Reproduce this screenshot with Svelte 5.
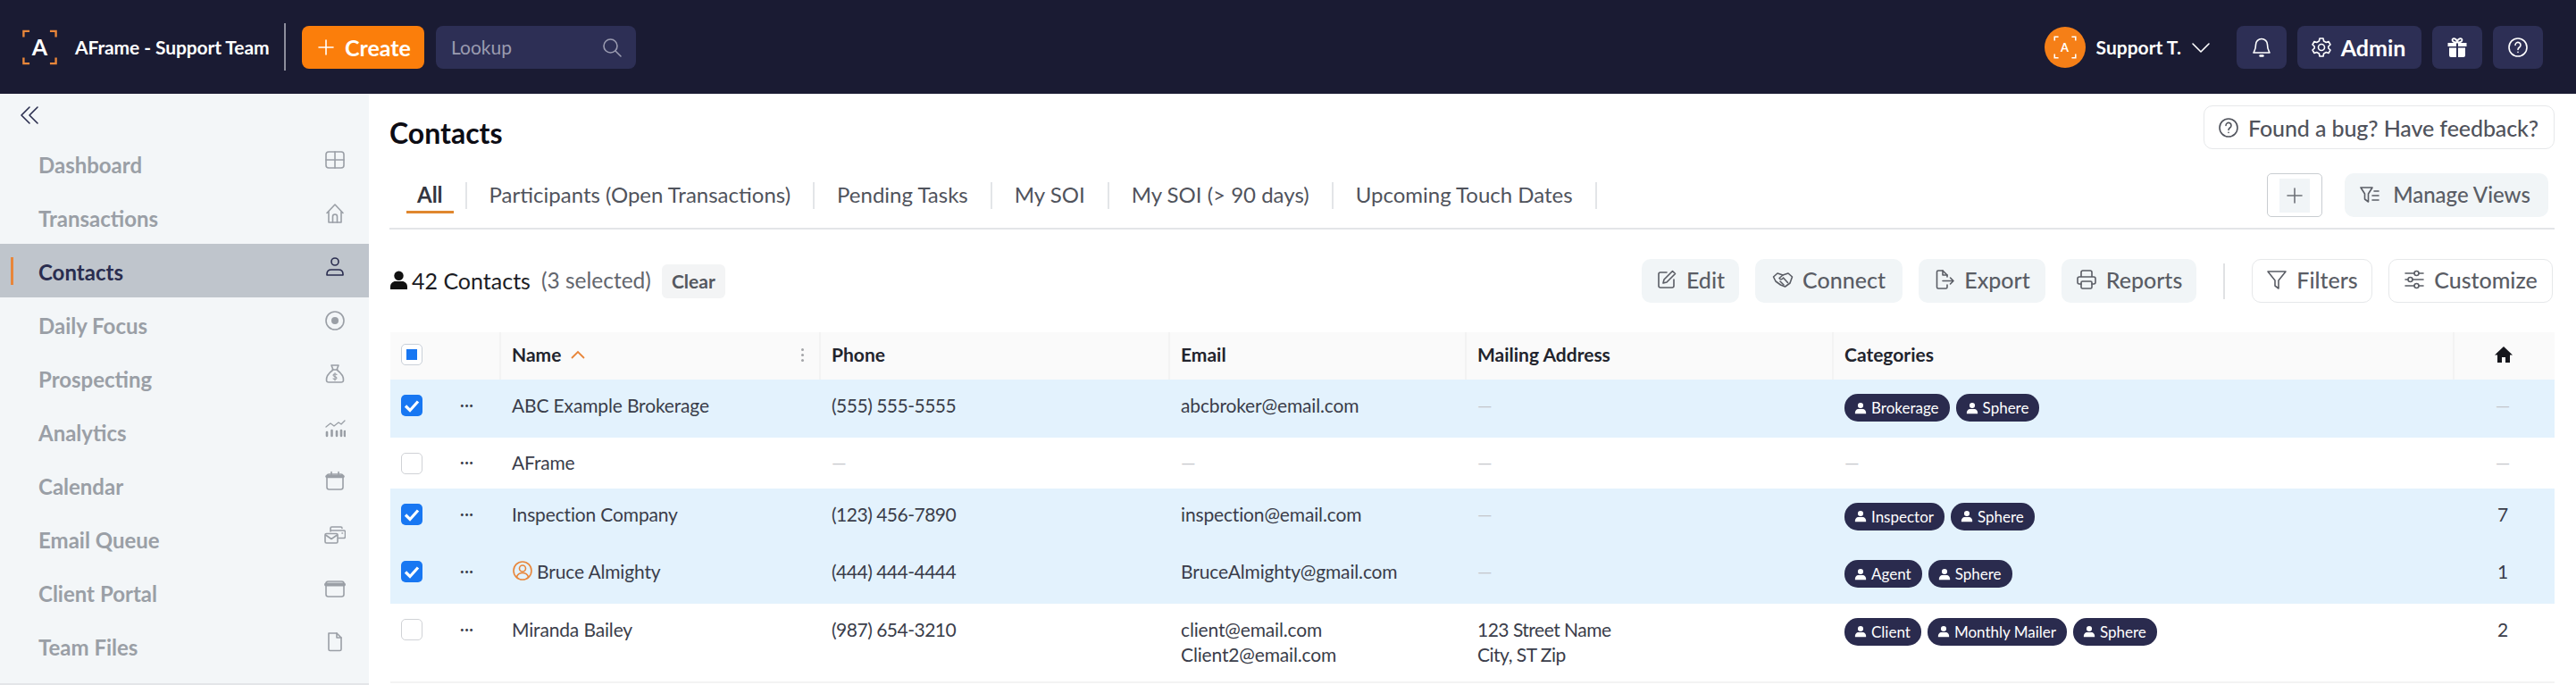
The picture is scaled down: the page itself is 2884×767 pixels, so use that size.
<script>
  const icons = {
    grid: '<rect x="2" y="3" width="20" height="18" rx="3"/><path d="M12 3v18M2 12h20"/>',
    home: '<path d="M3 11.500 12 2l9 9.500M5 9.500V22h14V9.500"/><path d="M9.500 22v-6.500a2.500 2.500 0 0 1 5 0V22"/>',
    person: '<circle cx="12" cy="6" r="4"/><path d="M3 21v-1c0-3 2-5 5-5h8c3 0 5 2 5 5v1z"/>',
    target: '<circle cx="12" cy="12" r="10"/><circle cx="12" cy="12" r="4" fill="currentColor" stroke="none"/>',
    bag: '<path d="M8 2h8l-2 5h-4zM9 7h6M10 7C6 10 2 15 2.500 19c.2 1.500 1.200 2 2.500 2h14c1.300 0 2.300-.5 2.500-2 .5-4-3.500-9-7.500-12"/><path d="M14 12.500c-1-1-4-1-4 .7s4 1.200 4 3-3 1.700-4 .7M12 10.500v8.500" stroke-width="1.100"/>',
    chart: '<path d="M2 11l5-4 4 3 5-4 3 2 4-4" stroke-width="1.300"/><path d="M3 17v4M8.500 15v6M14 16v5M19 15v6M23 16v5" stroke-width="2.600"/>',
    calendar: '<rect x="3" y="4" width="18" height="17" rx="2.500"/><path d="M3 6.500h18" stroke-width="3.500"/><path d="M8 1.500v3M16 1.500v3"/>',
    mail: '<path d="M7 8V4.500A1.500 1.500 0 0 1 8.500 3h10A1.500 1.500 0 0 1 20 4.500M7 7h15a1.500 1.500 0 0 1 1.500 1.500V14a1.500 1.500 0 0 1-1.500 1.500h-6"/><rect x="1" y="10.500" width="14" height="10.500" rx="1.500"/><path d="m1.500 12 6.500 4.500 6.500-4.500M20 10h.5"/>',
    browser: '<rect x="2" y="4" width="20" height="17" rx="2.500"/><path d="M2 7.500h20" stroke-width="4"/>',
    file: '<path d="M5 2h9l5 5v13a1.500 1.500 0 0 1-1.500 1.500h-11A1.500 1.500 0 0 1 5 20V2z"/><path d="M14 2v5h5"/>',
    plus: '<path d="M12 4v16M4 12h16"/>',
    search: '<circle cx="10.500" cy="10.500" r="7.500"/><path d="m16 16 6 6"/>',
    chevron: '<path d="m3 8 9 9 9-9"/>',
    bell: '<path d="M12 2.500a6.500 6.500 0 0 0-6.500 6.500c0 6-2 7.500-2.500 9h18c-.5-1.500-2.500-3-2.500-9A6.500 6.500 0 0 0 12 2.500z"/><path d="M10.500 21.500h3" stroke-width="2.400"/>',
    gear: '<circle cx="12" cy="12" r="3.500"/><path d="m10 2-.6 3L6.700 6.500 4 5.500 2 9l2.200 2v2L2 15l2 3.500 2.700-1 2.700 1.500.6 3h4l.6-3 2.700-1.500 2.700 1L22 15l-2.200-2v-2L22 9l-2-3.500-2.700 1L14.600 5 14 2z"/>',
    help: '<circle cx="12" cy="12" r="10"/><path d="M9 9.500a3 3 0 1 1 4.600 2.500c-1 .7-1.600 1.200-1.600 2.500M12 17.200v.3"/>',
    funnelList: '<path d="M2 4h13l-4.500 7v9l-4-3v-6z"/><path d="M17 8h5M15 13h7M15 18h7"/>',
    edit: '<path d="M12 4H5a2 2 0 0 0-2 2v13a2 2 0 0 0 2 2h13a2 2 0 0 0 2-2v-7"/><path d="M18.500 2.500 21.500 5.500 12 15l-4 1 1-4z"/>',
    shake: '<path d="M1.500 9 6 5l6 2 6-2 4.500 4-2.500 7-5.500 4-5-2-5.500-4z"/><path d="M12 7 8 10.500c1 2 3.500 1.500 4.500-.5l5 5.500M9 14l4 4"/>',
    export: '<path d="M15 9V7l-5-5H5a1.500 1.500 0 0 0-1.500 1.500v17A1.500 1.500 0 0 0 5 22h8.500a1.500 1.500 0 0 0 1.500-1.500V18"/><path d="M10 2v5h5M10 13.500h12M18.500 10l3.500 3.500-3.500 3.500"/>',
    print: '<path d="M6 9V4a2 2 0 0 1 2-2h8a2 2 0 0 1 2 2v5M6 17H4a2 2 0 0 1-2-2v-4a2 2 0 0 1 2-2h16a2 2 0 0 1 2 2v4a2 2 0 0 1-2 2h-2"/><rect x="6" y="14" width="12" height="8" rx="1.500"/>',
    funnel: '<path d="M2 3h20l-8 10v9l-4-3v-6z"/>',
    sliders: '<path d="M2 5h10M17 5h5M2 12h3M10 12h12M2 19h10M17 19h5"/><circle cx="14.500" cy="5" r="2.500"/><circle cx="7.500" cy="12" r="2.500"/><circle cx="14.500" cy="19" r="2.500"/>',
    userCircle: '<circle cx="12" cy="12" r="10"/><circle cx="12" cy="9.500" r="3.500"/><path d="M5.500 19c1-3 3-4.500 6.500-4.500s5.500 1.500 6.500 4.500"/>',
    back: '<path d="M12 3 3 12l9 9M21 3l-9 9 9 9"/>'
  };

  const nav = [
    { label: 'Dashboard', icon: 'grid' },
    { label: 'Transactions', icon: 'home' },
    { label: 'Contacts', icon: 'person', active: true },
    { label: 'Daily Focus', icon: 'target' },
    { label: 'Prospecting', icon: 'bag' },
    { label: 'Analytics', icon: 'chart' },
    { label: 'Calendar', icon: 'calendar' },
    { label: 'Email Queue', icon: 'mail' },
    { label: 'Client Portal', icon: 'browser' },
    { label: 'Team Files', icon: 'file' }
  ];

  const tabs = ['All', 'Participants (Open Transactions)', 'Pending Tasks', 'My SOI', 'My SOI (> 90 days)', 'Upcoming Touch Dates'];

  const actions = [
    { label: 'Edit', icon: 'edit', cls: 'a-edit' },
    { label: 'Connect', icon: 'shake', cls: 'a-connect' },
    { label: 'Export', icon: 'export', cls: 'a-export' },
    { label: 'Reports', icon: 'print', cls: 'a-reports' }
  ];

  const rows = [
    { name: 'ABC Example Brokerage', phone: '(555) 555-5555', email: ['abcbroker@email.com'], chips: ['Brokerage', 'Sphere'], count: '—', selected: true },
    { name: 'AFrame', phone: '—', email: ['—'], chips: [], count: '—' },
    { name: 'Inspection Company', phone: '(123) 456-7890', email: ['inspection@email.com'], chips: ['Inspector', 'Sphere'], count: '7', selected: true },
    { name: 'Bruce Almighty', phone: '(444) 444-4444', email: ['BruceAlmighty@gmail.com'], chips: ['Agent', 'Sphere'], count: '1', selected: true, agent: true },
    { name: 'Miranda Bailey', phone: '(987) 654-3210', email: ['client@email.com', 'Client2@email.com'], address: ['123 Street Name', 'City, ST Zip'], chips: ['Client', 'Monthly Mailer', 'Sphere'], count: '2' }
  ];
</script>

{#snippet icon(name, cls = '')}
  <svg class="icon {cls}" viewBox="0 0 24 24" fill="none" stroke="currentColor" stroke-width="1.600" stroke-linecap="round" stroke-linejoin="round">{@html icons[name]}</svg>
{/snippet}

{#snippet logo(cls)}
  <svg class={cls} viewBox="0 0 42 42" fill="none">
    <path d="M2 9V2h7M33 2h7v7M2 33v7h7M33 40h7v-7" stroke="currentColor" stroke-width="2.500"/>
  </svg>
{/snippet}

<div class="app">
  <header class="topbar">
    <div class="brand">
      <span class="logo">{@render logo('logo-frame')}<b>A</b></span>
      <span class="brand-name">AFrame - Support Team</span>
    </div>
    <button class="create">{@render icon('plus', 'create-plus')}Create</button>
    <div class="lookup"><span>Lookup</span>{@render icon('search', 'lookup-icon')}</div>
    <div class="topbar-right">
      <span class="avatar">{@render logo('avatar-frame')}<b>A</b></span>
      <span class="user">Support T.</span>
      {@render icon('chevron', 'user-chevron')}
      <button class="dark-btn square">{@render icon('bell')}</button>
      <button class="dark-btn admin">{@render icon('gear')}Admin</button>
      <button class="dark-btn square">
        <svg class="icon" viewBox="0 0 24 24" fill="currentColor"><path d="M1.500 7h9.500v4H1.500zM13 7h9.500v4H13zM3 12.500h8V23H5a2 2 0 0 1-2-2zM13 12.500h8V21a2 2 0 0 1-2 2h-6z"/><path d="M12 6.500C9 6.500 6.500 5.500 6.500 3.800 6.500 2.500 8 1.800 9.300 2.300 10.800 2.900 12 5 12 6.500c0-1.500 1.200-3.600 2.700-4.200 1.300-.5 2.800.2 2.800 1.500 0 1.700-2.500 2.700-5.500 2.700z" fill="none" stroke="currentColor" stroke-width="1.800"/></svg>
      </button>
      <button class="dark-btn square">{@render icon('help')}</button>
    </div>
  </header>

  <div class="body">
    <aside class="sidebar">
      <div class="collapse">{@render icon('back')}</div>
      <nav>
        {#each nav as item}
          <div class="nav-item" class:active={item.active}>
            <span>{item.label}</span>
            {@render icon(item.icon)}
          </div>
        {/each}
      </nav>
    </aside>

    <main class="main">
      <div class="title-row">
        <h1>Contacts</h1>
        <button class="feedback">{@render icon('help')}Found a bug? Have feedback?</button>
      </div>

      <div class="tabs-row">
        <div class="tabs">
          {#each tabs as tab, i}
            <div class="tab" class:current={i === 0}>{tab}</div>
          {/each}
        </div>
        <button class="add-view"><span>{@render icon('plus')}</span></button>
        <button class="soft-btn manage">{@render icon('funnelList')}Manage Views</button>
      </div>

      <div class="toolbar">
        <svg class="count-icon" viewBox="0 0 20 22" fill="currentColor"><circle cx="10" cy="6" r="5.500"/><path d="M0 22v-3c0-4 3-6.500 6-6.500h8c3 0 6 2.500 6 6.500v3z"/></svg>
        <span class="count">42 Contacts</span>
        <span class="selected">(3 selected)</span>
        <button class="clear">Clear</button>
        <div class="toolbar-actions">
          {#each actions as action}
            <button class="soft-btn {action.cls}">{@render icon(action.icon)}{action.label}</button>
          {/each}
          <span class="toolbar-sep"></span>
          <button class="line-btn a-filters">{@render icon('funnel')}Filters</button>
          <button class="line-btn a-customize">{@render icon('sliders')}Customize</button>
        </div>
      </div>

      <div class="table">
        <div class="grid head">
          <div class="cell"><span class="check partial"><i></i></span></div>
          <div class="cell"></div>
          <div class="cell sep name-head">
            <span>Name</span>
            <svg class="sort" viewBox="0 0 16 10" fill="none" stroke="currentColor" stroke-width="1.800"><path d="m1 9 7-7 7 7"/></svg>
            <span class="kebab"></span>
          </div>
          <div class="cell sep">Phone</div>
          <div class="cell sep">Email</div>
          <div class="cell sep">Mailing Address</div>
          <div class="cell sep">Categories</div>
          <div class="cell sep center">
            <svg class="house" viewBox="0 0 20 20" fill="currentColor"><path d="M10 1 0 10.500h3V19h5v-6h4v6h5v-8.500h3z"/></svg>
          </div>
        </div>

        {#each rows as row}
          <div class="grid row" class:selected-row={row.selected} class:has-chips={row.chips.length > 0}>
            <div class="cell">
              <span class="check" class:on={row.selected}>
                {#if row.selected}
                  <svg viewBox="0 0 24 24" fill="none" stroke="#fff" stroke-width="3.200"><path d="m5 12.500 5 5 9-10"/></svg>
                {/if}
              </span>
            </div>
            <div class="cell dots">•••</div>
            <div class="cell name">
              {#if row.agent}{@render icon('userCircle', 'agent')}{/if}{row.name}
            </div>
            <div class="cell tight" class:dash={row.phone === '—'}>{row.phone}</div>
            <div class="cell" class:dash={row.email[0] === '—'}>
              {#each row.email as line}<div>{line}</div>{/each}
            </div>
            <div class="cell tight" class:dash={!row.address}>
              {#if row.address}
                {#each row.address as line}<div>{line}</div>{/each}
              {:else}—{/if}
            </div>
            <div class="cell chips" class:dash={row.chips.length === 0}>
              {#each row.chips as chip}
                <span class="chip">
                  <svg viewBox="0 0 16 16" fill="currentColor"><circle cx="8" cy="4.500" r="3.500"/><path d="M1 15v-1.500C1 11 3 9 5 9h6c2 0 4 2 4 4.500V15z"/></svg>{chip}
                </span>
              {:else}—{/each}
            </div>
            <div class="cell center" class:dash={row.count === '—'}>{row.count}</div>
          </div>
        {/each}
      </div>
    </main>
  </div>
</div>

<style>
  :global(body) {
    margin: 0;
    overflow: hidden;
    background: #fff;
  }

  .app {
    width: 2884px;
    height: 767px;
    overflow: hidden;
    font-family: Lato, "Noto Sans", sans-serif;
    color: #3a3d4a;
    display: flex;
    flex-direction: column;
  }

  button {
    font: inherit;
    border: 0;
    background: none;
    color: inherit;
    padding: 0;
    display: inline-flex;
    align-items: center;
    white-space: nowrap;
  }

  .icon {
    width: 24px;
    height: 24px;
    flex: none;
  }

  /* top bar */
  .topbar {
    height: 105px;
    flex: none;
    background: #1a1b33;
    color: #fff;
    display: flex;
    align-items: center;
    padding: 0 37px 0 24px;
    box-sizing: border-box;
  }

  .brand {
    display: flex;
    align-items: center;
    width: 294px;
    height: 53px;
    border-right: 2px solid #8d8e9c;
  }

  .logo {
    width: 41px;
    height: 40px;
    position: relative;
    display: flex;
    align-items: center;
    justify-content: center;
    color: #e8863a;
    margin-right: 19px;
  }

  .logo b {
    color: #fff;
    font-size: 25px;
    line-height: 1;
  }

  :global(.logo-frame),
  :global(.avatar-frame) {
    position: absolute;
    inset: 0;
    width: 100%;
    height: 100%;
  }

  .brand-name {
    font-size: 21px;
    font-weight: 700;
    letter-spacing: -0.100px;
    white-space: nowrap;
  }

  .create {
    margin-left: 18px;
    width: 137px;
    height: 48px;
    background: #fb7e0b;
    border-radius: 8px;
    font-size: 25px;
    font-weight: 700;
    justify-content: center;
    gap: 9px;
  }

  :global(.create-plus) {
    width: 20px;
    height: 20px;
  }

  .lookup {
    margin-left: 13px;
    width: 224px;
    height: 48px;
    background: #2d2f55;
    border-radius: 8px;
    box-sizing: border-box;
    padding: 0 15px 0 17px;
    display: flex;
    align-items: center;
    justify-content: space-between;
    color: #9a9bb0;
    font-size: 21px;
  }

  :global(.lookup-icon) {
    width: 21px;
    height: 21px;
  }

  .topbar-right {
    margin-left: auto;
    display: flex;
    align-items: center;
  }

  .avatar {
    width: 46px;
    height: 46px;
    border-radius: 50%;
    background: #f57f17;
    position: relative;
    display: flex;
    align-items: center;
    justify-content: center;
    margin-right: 12px;
  }

  .avatar b {
    font-size: 13px;
    color: #fff;
  }

  :global(.avatar-frame) {
    inset: 10px;
    width: 26px;
    height: 26px;
  }

  .user {
    font-size: 21px;
    font-weight: 700;
    white-space: nowrap;
  }

  :global(.user-chevron) {
    width: 20px;
    height: 20px;
    margin: 0 28px 0 10px;
  }

  .dark-btn {
    height: 48px;
    background: #2d2f55;
    border-radius: 8px;
    justify-content: center;
    margin-left: 12px;
  }

  .dark-btn:first-of-type {
    margin-left: 0;
  }

  .square {
    width: 56px;
  }

  .admin {
    width: 139px;
    gap: 10px;
    font-size: 25px;
    font-weight: 700;
    padding-right: 3px;
    box-sizing: border-box;
  }

  /* sidebar */
  .body {
    flex: 1;
    display: flex;
    min-height: 0;
  }

  .sidebar {
    width: 413px;
    flex: none;
    background: #f3f6f8;
    border-bottom: 2px solid #e3e5e8;
    box-sizing: border-box;
  }

  .collapse {
    height: 48px;
    padding-left: 21px;
    display: flex;
    align-items: center;
    color: #2a2d4f;
  }

  .nav-item {
    height: 60px;
    box-sizing: border-box;
    padding: 3px 26px 0 43px;
    display: flex;
    align-items: center;
    justify-content: space-between;
    font-size: 24px;
    font-weight: 700;
    color: #9a9fa6;
    position: relative;
  }

  .nav-item :global(.icon) {
    transform: translateY(-6px);
  }

  .nav-item.active {
    background: #bfc5cc;
    color: #2a2d4f;
  }

  .nav-item.active::before {
    content: "";
    position: absolute;
    left: 12px;
    top: 15px;
    width: 3px;
    height: 31px;
    background: #e8863a;
  }

  /* main */
  .main {
    flex: 1;
    min-width: 0;
    padding: 13px 24px 0 23px;
  }

  .title-row {
    display: flex;
    justify-content: space-between;
    align-items: flex-start;
    height: 49px;
  }

  h1 {
    margin: 13px 0 0;
    font-size: 32px;
    line-height: 36px;
    font-weight: 700;
    color: #0c0c14;
  }

  .feedback {
    height: 49px;
    width: 393px;
    box-sizing: border-box;
    border: 1px solid #e6e8ea;
    border-radius: 10px;
    justify-content: center;
    gap: 10px;
    padding-right: 2px;
    font-size: 25px;
    letter-spacing: -0.100px;
    font-weight: 500;
    color: #50535c;
  }

  .tabs-row {
    margin-top: 27px;
    padding-bottom: 12px;
    border-bottom: 2px solid #e3e5e8;
    display: flex;
    align-items: center;
  }

  .tabs {
    display: flex;
    align-items: center;
    flex: 1;
    padding-left: 6px;
  }

  .tab {
    height: 30px;
    line-height: 28px;
    padding: 0 25px;
    border-right: 2px solid #e3e5e8;
    font-size: 24px;
    color: #50535c;
    position: relative;
    white-space: nowrap;
  }

  .tab.current {
    font-weight: 700;
    color: #33353f;
  }

  .tab.current::after {
    content: "";
    position: absolute;
    left: 13px;
    right: 13px;
    bottom: -5px;
    height: 3px;
    background: #e0872e;
  }

  .add-view {
    width: 62px;
    height: 49px;
    box-sizing: border-box;
    border: 1px solid #c9cdd1;
    border-radius: 5px;
    justify-content: center;
    margin-right: 25px;
    color: #6e7278;
  }

  .add-view span {
    width: 34px;
    height: 38px;
    background: #f1f5f7;
    display: flex;
    align-items: center;
    justify-content: center;
  }

  .soft-btn,
  .line-btn {
    height: 49px;
    box-sizing: border-box;
    padding: 0 0 4px;
    border-radius: 10px;
    gap: 10px;
    font-size: 25px;
    font-weight: 500;
    color: #5a5d65;
    justify-content: center;
  }

  .soft-btn {
    background: #f1f5f7;
  }

  .line-btn {
    border: 1px solid #e6e8ea;
  }

  .manage {
    width: 228px;
    margin-right: 7px;
    padding: 0 4px 2px 0;
    gap: 14px;
    font-size: 24px;
  }

  .a-edit { width: 109px; }
  .a-connect { width: 165px; }
  .a-export { width: 142px; }
  .a-reports { width: 151px; }
  .a-filters { width: 135px; }
  .a-customize { width: 184px; }

  /* toolbar */
  .toolbar {
    margin-top: 33px;
    height: 49px;
    padding: 0 2px 0 1px;
    display: flex;
    align-items: center;
    font-size: 25px;
  }

  .count-icon {
    width: 19px;
    height: 21px;
    color: #111;
    margin: 0 5px 2px 0;
  }

  .count {
    color: #1b1c24;
    margin-bottom: 2px;
  }

  .selected {
    margin: 0 0 2px 12px;
    color: #63666e;
    font-size: 24.500px;
  }

  .clear {
    margin-left: 12px;
    height: 38px;
    width: 71px;
    justify-content: center;
    background: #f3f4f5;
    border-radius: 6px;
    font-size: 21px;
    font-weight: 700;
    color: #55585f;
  }

  .toolbar-actions {
    margin-left: auto;
    display: flex;
    align-items: center;
    gap: 18px;
  }

  .toolbar-sep {
    width: 2px;
    height: 40px;
    background: #e0e2e4;
    margin: 0 12px;
  }

  /* table */
  .table {
    margin-top: 33px;
    margin-left: 1px;
  }

  .grid {
    display: grid;
    grid-template-columns: 61px 61px 358px 391px 332px 411px 695px 114px;
    font-size: 21px;
    letter-spacing: -0.150px;
    line-height: 28px;
    color: #3a3d4a;
  }

  .cell {
    box-sizing: border-box;
    padding: 14px 14px 15px;
    min-width: 0;
  }

  .tight {
    letter-spacing: -0.500px;
  }

  .head {
    height: 53px;
    background: #fafafa;
    font-weight: 700;
    color: #22242d;
    letter-spacing: 0;
  }

  .head .cell {
    display: flex;
    align-items: center;
    padding: 0 14px 4px;
    font-size: 21px;
  }

  .head .sep {
    border-left: 2px solid #f3f3f3;
    padding-left: 12px;
  }

  .head .center,
  .row .center {
    justify-content: center;
    text-align: center;
    padding-left: 0;
    padding-right: 2px;
  }

  .name-head {
    position: relative;
  }

  .sort {
    width: 16px;
    height: 10px;
    margin-left: 11px;
    color: #e8863a;
  }

  .kebab {
    position: absolute;
    right: 17px;
    top: 18px;
    width: 3px;
    height: 3px;
    border-radius: 50%;
    background: #a3a5a8;
    box-shadow: 0 6px #a3a5a8, 0 12px #a3a5a8;
  }

  .house {
    width: 20px;
    height: 20px;
    color: #15161c;
  }

  .has-chips .cell {
    padding-top: 15px;
    padding-bottom: 16.500px;
  }

  .has-chips .chips {
    padding-top: 16px;
    padding-bottom: 17.500px;
  }

  .has-chips .check {
    margin-top: 2px;
  }

  .selected-row {
    background: #e3f2fd;
  }

  .row:last-child {
    border-bottom: 2px solid #f3f3f3;
  }

  .check {
    width: 24px;
    height: 24px;
    box-sizing: border-box;
    border: 1px solid #d0d2d6;
    border-radius: 5px;
    background: #fff;
    display: block;
    margin-top: 3px;
    margin-left: -2px;
  }

  .check.on {
    border: 0;
    background: #1877f2;
  }

  .check svg {
    display: block;
    width: 24px;
    height: 24px;
  }

  .check.partial {
    margin-top: 0;
    border-color: #c9d0d8;
    display: flex;
    align-items: center;
    justify-content: center;
  }

  .check.partial i {
    width: 12px;
    height: 12px;
    background: #1877f2;
  }

  .dots {
    font-size: 8px;
    letter-spacing: 0.500px;
    padding-left: 17px;
    color: #3a3d4a;
  }

  .name {
    white-space: nowrap;
  }

  :global(.agent) {
    width: 18px;
    height: 18px;
    color: #e8863a;
    margin-right: 4px;
    vertical-align: -3px;
  }

  .dash {
    color: #c4c6cb;
  }

  .chips {
    display: flex;
    align-items: flex-start;
    gap: 7px;
  }

  .chip {
    height: 31px;
    box-sizing: border-box;
    padding: 0 12px 0 11px;
    border-radius: 15px;
    background: #2a2b4e;
    color: #fff;
    font-size: 17px;
    letter-spacing: 0;
    line-height: 31px;
    display: inline-flex;
    align-items: center;
    gap: 5px;
    white-space: nowrap;
  }

  .chip svg {
    width: 14px;
    height: 14px;
  }
</style>
